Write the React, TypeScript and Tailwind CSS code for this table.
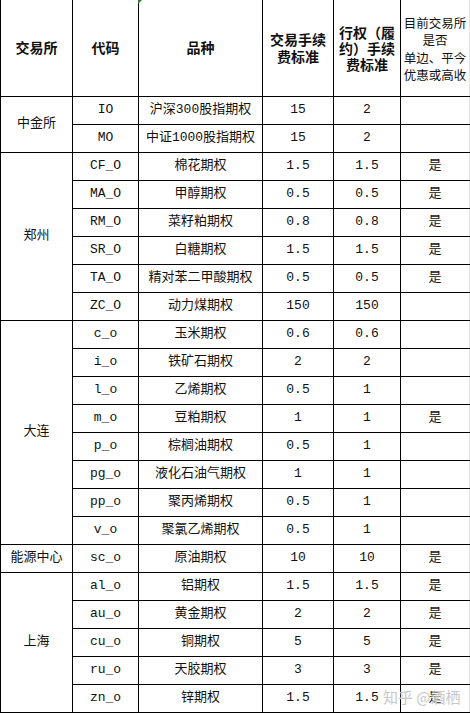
type Row = {
    code: string;
    name: string;
    fee: string;
    exercise: string;
    discount: string;
};

type Group = {
    exchange: string;
    rows: Row[];
};

const groups: Group[] = [
    {
        exchange: '中金所',
        rows: [
            { code: 'IO', name: '沪深300股指期权', fee: '15', exercise: '2', discount: '' },
            { code: 'MO', name: '中证1000股指期权', fee: '15', exercise: '2', discount: '' },
        ],
    },
    {
        exchange: '郑州',
        rows: [
            { code: 'CF_O', name: '棉花期权', fee: '1.5', exercise: '1.5', discount: '是' },
            { code: 'MA_O', name: '甲醇期权', fee: '0.5', exercise: '0.5', discount: '是' },
            { code: 'RM_O', name: '菜籽粕期权', fee: '0.8', exercise: '0.8', discount: '是' },
            { code: 'SR_O', name: '白糖期权', fee: '1.5', exercise: '1.5', discount: '是' },
            { code: 'TA_O', name: '精对苯二甲酸期权', fee: '0.5', exercise: '0.5', discount: '是' },
            { code: 'ZC_O', name: '动力煤期权', fee: '150', exercise: '150', discount: '' },
        ],
    },
    {
        exchange: '大连',
        rows: [
            { code: 'c_o', name: '玉米期权', fee: '0.6', exercise: '0.6', discount: '' },
            { code: 'i_o', name: '铁矿石期权', fee: '2', exercise: '2', discount: '' },
            { code: 'l_o', name: '乙烯期权', fee: '0.5', exercise: '1', discount: '' },
            { code: 'm_o', name: '豆粕期权', fee: '1', exercise: '1', discount: '是' },
            { code: 'p_o', name: '棕榈油期权', fee: '0.5', exercise: '1', discount: '' },
            { code: 'pg_o', name: '液化石油气期权', fee: '1', exercise: '1', discount: '' },
            { code: 'pp_o', name: '聚丙烯期权', fee: '0.5', exercise: '1', discount: '' },
            { code: 'v_o', name: '聚氯乙烯期权', fee: '0.5', exercise: '1', discount: '' },
        ],
    },
    {
        exchange: '能源中心',
        rows: [
            { code: 'sc_o', name: '原油期权', fee: '10', exercise: '10', discount: '是' },
        ],
    },
    {
        exchange: '上海',
        rows: [
            { code: 'al_o', name: '铝期权', fee: '1.5', exercise: '1.5', discount: '是' },
            { code: 'au_o', name: '黄金期权', fee: '2', exercise: '2', discount: '是' },
            { code: 'cu_o', name: '铜期权', fee: '5', exercise: '5', discount: '是' },
            { code: 'ru_o', name: '天胶期权', fee: '3', exercise: '3', discount: '是' },
            { code: 'zn_o', name: '锌期权', fee: '1.5', exercise: '1.5', discount: '是' },
        ],
    },
];

const cell = "border border-black text-center align-middle p-0 h-[28px]";

export default function App() {
    return (
        <div className="relative w-[470px] h-[713px] bg-white text-[#111] font-['Liberation_Mono','Noto_Sans_CJK_SC',monospace] overflow-hidden">
            <table className="table-fixed border-collapse w-[469px]">
                <colgroup>
                    <col className="w-[72px]" />
                    <col className="w-[66px]" />
                    <col className="w-[124px]" />
                    <col className="w-[71px]" />
                    <col className="w-[67px]" />
                    <col className="w-[69px]" />
                </colgroup>
                <thead>
                    <tr>
                        <th className="border border-black border-t-0 h-[96px] p-0 pt-1 text-[14px] font-bold text-center">
                            交易所
                        </th>
                        <th className="border border-black border-t-0 p-0 pt-1 text-[14px] font-bold text-center">
                            代码
                        </th>
                        <th className="border border-black border-t-0 p-0 pt-1 text-[14px] font-bold text-center">
                            品种
                        </th>
                        <th className="border border-black border-t-0 p-0 pt-1 text-[14px] font-bold text-center leading-[17px]">
                            交易手续<br />费标准
                        </th>
                        <th className="border border-black border-t-0 p-0 pt-1 text-[14px] font-bold text-center leading-[16px]">
                            行权（履<br />约）手续<br />费标准
                        </th>
                        <th className="border border-black border-t-0 border-r-[#e4e4e4] p-0 pt-2 text-[12.5px] font-normal text-center leading-[17.5px]">
                            目前交易所<br />是否<br />单边、平今<br />优惠或高收
                        </th>
                    </tr>
                </thead>
                <tbody className="text-[13px]">
                    {groups.map((group) =>
                        group.rows.map((row, i) => (
                            <tr key={row.code}>
                                {i === 0 && (
                                    <td rowSpan={group.rows.length} className={cell}>
                                        {group.exchange}
                                    </td>
                                )}
                                <td className={cell}>{row.code}</td>
                                <td className={cell}>{row.name}</td>
                                <td className={cell}>{row.fee}</td>
                                <td className={cell}>{row.exercise}</td>
                                <td className={cell + " border-r-[#e4e4e4]"}>{row.discount}</td>
                            </tr>
                        ))
                    )}
                </tbody>
            </table>

            {/* comment marker from the spreadsheet */}
            <div className="absolute left-[138px] top-0 w-0 h-0 border-t-[4px] border-t-[#2e7d32] border-r-[4px] border-r-transparent" />

            {/* watermark */}
            <div className="absolute left-[383px] top-[686px] text-[15px] text-[#c8c8c8] font-['Noto_Sans_CJK_SC',sans-serif] [text-shadow:0_0_2px_#fff]">
                知乎 @酒栖
            </div>
        </div>
    );
}
